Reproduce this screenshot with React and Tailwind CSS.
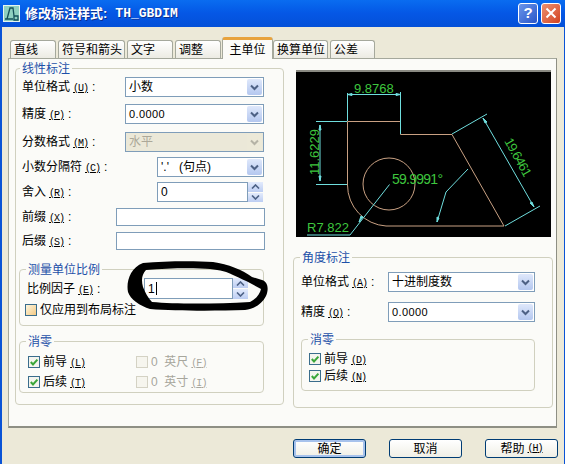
import React from "react";

const CJK = "font-['Tahoma','Liberation_Sans','Noto_Sans_CJK_SC',sans-serif]";

function Mn({ children, gray }) {
  return (
    <span className={`text-[10px] ml-[3px] tracking-[-1px] underline font-['Liberation_Mono',monospace] ${gray ? "text-[#a7a69c]" : ""}`}>
      ({children})
    </span>
  );
}

function Chevron({ gray }) {
  return (
    <svg width="9" height="7" viewBox="0 0 9 7">
      <path d="M1 1.5 L4.5 5 L8 1.5" fill="none" stroke={gray ? "#b5b3a6" : "#4d6185"} strokeWidth="2" />
    </svg>
  );
}

function Select({ value, w, disabled, num }) {
  return (
    <div
      className={`h-5 flex items-center justify-between border border-[#7f9db9] pl-[3px] pr-px ${
        disabled ? "bg-[#ebe8d8] text-[#aca899]" : "bg-white text-black"
      } ${w}`}
    >
      <span className={`whitespace-nowrap ${num ? "text-[11px] tracking-[0.4px]" : ""}`}>{value}</span>
      <span
        className={`w-[15px] h-4 flex items-center justify-center rounded-[2px] ${
          disabled ? "bg-[#ece9d8]" : "bg-gradient-to-b from-[#dfe8fb] to-[#b4c7ef]"
        }`}
      >
        <Chevron gray={disabled} />
      </span>
    </div>
  );
}

function Spin({ value, w, h = "h-5", caret }) {
  return (
    <div className="flex">
      <div className={`${w} ${h} bg-white border border-[#7f9db9] flex items-center pl-[3px]`}>
        <span className="font-['Liberation_Sans',sans-serif] text-[12px]">{value}</span>
        {caret && <span className="w-px h-[13px] bg-black ml-px" />}
      </div>
      <div className="w-[15px] flex flex-col gap-px">
        {[0, 1].map((i) => (
          <div key={i} className="flex-1 bg-gradient-to-b from-[#e3ebfc] to-[#bccdf2] flex items-center justify-center">
            <svg width="9" height="5" viewBox="0 0 9 5">
              <path d={i === 0 ? "M1 4.5 L4.5 1 L8 4.5" : "M1 .5 L4.5 4 L8 .5"} fill="none" stroke="#4d6185" strokeWidth="1.6" />
            </svg>
          </div>
        ))}
      </div>
    </div>
  );
}

function Group({ title, className, legend = "ml-[6px]", children }) {
  return (
    <div className={`border border-[#d0d0bf] rounded-[4px] ${className}`}>
      <div className={`-mt-[8px] ${legend} w-fit bg-[#fbfbf8] px-[2px] h-4 leading-4 text-[#1d50a8] text-[12px]`}>{title}</div>
      {children}
    </div>
  );
}

function Check({ checked, label, mn, gray, boxBg }) {
  return (
    <div className="flex items-center h-[13px]">
      <span
        className={`w-3 h-3 shrink-0 border flex items-center justify-center ${
          gray ? "border-[#d4d2c4] bg-[#f6f5ee]" : "border-[#3a6d8c] " + (boxBg || "bg-[#f4f4ee]")
        }`}
      >
        {checked && (
          <svg width="10" height="10" viewBox="0 0 10 10">
            <path d="M1.8 5 L4 7.4 L8.4 2.6" fill="none" stroke="#3aa63a" strokeWidth="2" />
          </svg>
        )}
      </span>
      <span className={`ml-[3px] whitespace-nowrap ${gray ? "text-[#a7a69c]" : ""}`}>
        {label}
        {mn && <Mn gray={gray}>{mn}</Mn>}
      </span>
    </div>
  );
}

function Row({ label, mn, labelW, className, children }) {
  return (
    <div className={`flex items-center ${className || ""}`}>
      <div className={`${labelW} whitespace-nowrap`}>
        {label}
        <Mn>{mn}</Mn>
        <span className="ml-[4px]">:</span>
      </div>
      {children}
    </div>
  );
}

function Tab({ label, w, active }) {
  return active ? (
    <div className={`${w} h-[22px] -mb-px -ml-px z-10 bg-[#fbfbf8] border-x border-[#a5a89c] border-t-[3px] border-t-[#e8a33d] rounded-t-[3px] flex items-center justify-center text-[12px] whitespace-nowrap`}>
      {label}
    </div>
  ) : (
    <div className={`${w} h-[18px] border-x border-t border-[#a5a89c] rounded-t-[3px] bg-gradient-to-b from-white to-[#ecebe3] flex items-center pl-[3px] text-[12px] mr-[2px] whitespace-nowrap`}>
      {label}
    </div>
  );
}

function Btn({ label, mn, primary }) {
  return (
    <div
      className={`w-[73px] h-[19px] rounded-[3px] border border-[#003c74] flex items-center justify-center bg-gradient-to-b from-white to-[#f0efe6] ${
        primary ? "shadow-[inset_0_0_0_2px_#a7c2ec]" : ""
      }`}
    >
      {label}
      {mn && <Mn>{mn}</Mn>}
    </div>
  );
}

function Preview() {
  const o = "#c9a183";
  const c = "#6fdede";
  const g = "#3ec63e";
  return (
    <svg className="block w-[255px] h-[165px]" viewBox="296 72 255 165">
      <rect x="296" y="72" width="255" height="165" fill="#000" />
      <g fill="none" stroke={o} strokeWidth="1">
        <path d="M347.5 185 V121.5 H400.5 V134.5 H452 L504 226 H386 A41 41 0 0 1 347.5 185" />
        <circle cx="389" cy="184" r="26" />
      </g>
      <g fill="none" stroke={c} strokeWidth="1">
        <path d="M347.5 93 V121 M400.5 92 V134 M347.5 94.5 H400.5" />
        <path d="M316 121.5 H347 M316 184.5 H347 M320 125 V181" />
        <path d="M452 134 L487 114 M505 226 L540 206 M483 118 L534 207" />
        <path d="M307 235 H350 L389.5 184.5" />
        <path d="M437 222 L446 192 L468 169" />
      </g>
      <g fill={c} stroke={c} strokeWidth="1">
        <path d="M347.5 94.5 L352 93.5 V95.5 Z M400.5 94.5 L396 93.5 V95.5 Z" />
        <path d="M320 125 L319 130 H321 Z M320 181 L319 176 H321 Z" />
        <path d="M483 118 L487 122 L485 123 Z M534 207 L530 203 L532 202 Z" />
        <path d="M359 222 L363 217 L361 216 Z M437 222 L437 217 L439 218 Z" />
      </g>
      <g fill={g} fontFamily="'Liberation Sans', sans-serif" fontSize="13">
        <text x="354" y="93">9.8768</text>
        <text x="392" y="184" fontSize="14" textLength="51">59.9991°</text>
        <text x="307" y="232">R7.822</text>
        <text transform="translate(319 175) rotate(-90)" textLength="46">11.6229</text>
        <text transform="translate(504 141) rotate(61)" textLength="42">19.6461</text>
      </g>
    </svg>
  );
}

export default function App() {
  return (
    <div className={`relative w-[565px] h-[464px] flex flex-col overflow-hidden bg-[#0a53d6] text-[12px] text-black ${CJK}`}>
      {/* title bar */}
      <div className="h-[27px] shrink-0 flex items-center bg-gradient-to-b from-[#0a6cf0] via-[#0557e5] to-[#0450d8] pl-[3px] pr-[4px]">
        <svg width="17" height="17" viewBox="0 0 17 17" className="shrink-0">
          <rect x="0.5" y="0.5" width="16" height="16" fill="#8fd0c0" stroke="#e5f5f0" />
          <path d="M2 14 H10 M4 14 L7 3 H10 L11 11 M11 11 H15 V15 H11 Z" fill="none" stroke="#15505a" strokeWidth="1.3" />
        </svg>
        <div className="ml-[5px] flex items-center text-white font-bold text-[13px] [text-shadow:1px_1px_#0b2f8f] whitespace-nowrap">
          <span>修改标注样式:</span>
          <span className="ml-[8px] font-['Liberation_Mono',monospace] text-[13px]">TH_GBDIM</span>
        </div>
        <div className="ml-auto flex gap-[3px] mt-[-1px]">
          <div className="w-[20px] h-[21px] rounded-[3px] border border-white bg-gradient-to-br from-[#6b95ea] to-[#2a55c8] flex items-center justify-center text-white font-bold text-[15px] font-['Liberation_Sans',sans-serif]">
            ?
          </div>
          <div className="w-[20px] h-[21px] rounded-[3px] border border-white bg-gradient-to-br from-[#ec9070] to-[#d2401c] flex items-center justify-center">
            <svg width="12" height="12" viewBox="0 0 12 12">
              <path d="M1.5 1.5 L10.5 10.5 M10.5 1.5 L1.5 10.5" stroke="#fff" strokeWidth="2" />
            </svg>
          </div>
        </div>
      </div>

      {/* body */}
      <div className="flex-1 ml-[2px] mr-[1px] bg-[#ece9d8] flex flex-col pl-[6px] pr-[7px]">
        {/* tabs */}
        <div className="flex items-end pl-[2px] pt-[9px] h-[31px] shrink-0">
          <Tab label="直线" w="w-[46px]" />
          <Tab label="符号和箭头" w="w-[67px]" />
          <Tab label="文字" w="w-[46px]" />
          <Tab label="调整" w="w-[46px]" />
          <Tab label="主单位" w="w-[51px]" active />
          <Tab label="换算单位" w="w-[55px]" />
          <Tab label="公差" w="w-[45px]" />
        </div>

        {/* panel */}
        <div className="h-[370px] w-[549px] shrink-0 bg-[#fbfbf8] border border-[#a5a89c] border-r-[#8e8f84] border-b-[#8e8f84] border-b-2 flex pl-[6px] pt-[9px]">
          {/* left */}
          <Group title="线性标注" legend="-ml-[2px]" className="w-[269px] h-[337px] px-[6px]">
            <div className="flex flex-col">
              <Row label="单位格式" mn="U" labelW="w-[103px]">
                <Select value="小数" w="w-[139px]" />
              </Row>
              <Row label="精度" mn="P" labelW="w-[103px]" className="mt-[7px]">
                <Select value="0.0000" w="w-[139px]" num />
              </Row>
              <Row label="分数格式" mn="M" labelW="w-[103px]" className="mt-[8px]">
                <Select value="水平" w="w-[139px]" disabled />
              </Row>
              <Row label="小数分隔符" mn="C" labelW="w-[135px]" className="mt-[5px]">
                <Select value={"'.'\u00a0\u00a0\u00a0(句点)"} w="w-[107px]" />
              </Row>
              <Row label="舍入" mn="R" labelW="w-[135px]" className="mt-[5px]">
                <Spin value="0" w="w-[91px]" />
              </Row>
              <Row label="前缀" mn="X" labelW="w-[94px]" className="mt-[6px]">
                <div className="w-[149px] h-[18px] bg-white border border-[#7f9db9]" />
              </Row>
              <Row label="后缀" mn="S" labelW="w-[94px]" className="mt-[6px]">
                <div className="w-[149px] h-[18px] bg-white border border-[#7f9db9]" />
              </Row>
            </div>

            <Group title="测量单位比例" className="w-[245px] h-[57px] mt-[19px] -ml-[3px]">
              <div className="pl-[7px]">
                <Row label="比例因子" mn="E" labelW="w-[117px]">
                  <Spin value="1" w="w-[89px]" h="h-[21px]" caret />
                </Row>
                <div className="-ml-[2px] mt-[4px]">
                  <Check label="仅应用到布局标注" boxBg="bg-gradient-to-br from-[#fdf6de] to-[#f3c983]" />
                </div>
              </div>
            </Group>

            <Group title="消零" className="w-[245px] h-[52px] mt-[15px] -ml-[3px]">
              <div className="grid grid-cols-[108px_1fr] gap-y-[7px] pl-[8px] pt-[5px]">
                <Check checked label="前导" mn="L" />
                <Check gray label={"0\u00a0\u00a0英尺"} mn="F" />
                <Check checked label="后续" mn="T" />
                <Check gray label={"0\u00a0\u00a0英寸"} mn="I" />
              </div>
            </Group>
          </Group>

          {/* right */}
          <div className="ml-[9px] w-[260px] flex flex-col">
            <div className="ml-[3px] mt-[2px] w-[255px] border-t-2 border-[#8a8a82]">
              <Preview />
            </div>
            <Group title="角度标注" legend="-ml-px" className="h-[151px] w-[260px] mt-[20px] px-[7px]">
              <Row label="单位格式" mn="A" labelW="w-[87px]" className="mt-[6px]">
                <Select value="十进制度数" w="w-[147px]" />
              </Row>
              <Row label="精度" mn="Q" labelW="w-[87px]" className="mt-[10px]">
                <Select value="0.0000" w="w-[147px]" num />
              </Row>
              <Group title="消零" className="w-[234px] h-[52px] mt-[17px]">
                <div className="flex flex-col gap-[4px] pl-[7px] pt-[4px]">
                  <Check checked label="前导" mn="D" />
                  <Check checked label="后续" mn="N" />
                </div>
              </Group>
            </Group>
          </div>
        </div>

        {/* buttons */}
        <div className="flex justify-end gap-[23px] pt-[11px] -mr-px">
          <Btn label="确定" primary />
          <Btn label="取消" />
          <Btn label="帮助" mn="H" />
        </div>
      </div>

      {/* hand-drawn scribble over the dialog */}
      <svg className="absolute left-0 top-0 pointer-events-none" width="565" height="464" viewBox="0 0 565 464">
        <path
          fillRule="evenodd"
          fill="#000"
          d="M143 263 C165 261 195 261 213 262 C228 264 243 270 252 277 L262 280 C268 282 269 289 266 296 C262 304 254 309 245 310 C215 311 175 311 150 309 C140 306 130 299 128 292 C126 282 130 268 143 263 Z M146 270 C170 268 195 268 210 269 C220 270 228 272 233 275 C240 278 246 281 250 283 L261 289 C260 294 256 299 250 302 C215 304 175 304 152 302 C148 298 145 292 143 287 C141 280 142 274 146 270 Z"
        />
      </svg>
    </div>
  );
}
